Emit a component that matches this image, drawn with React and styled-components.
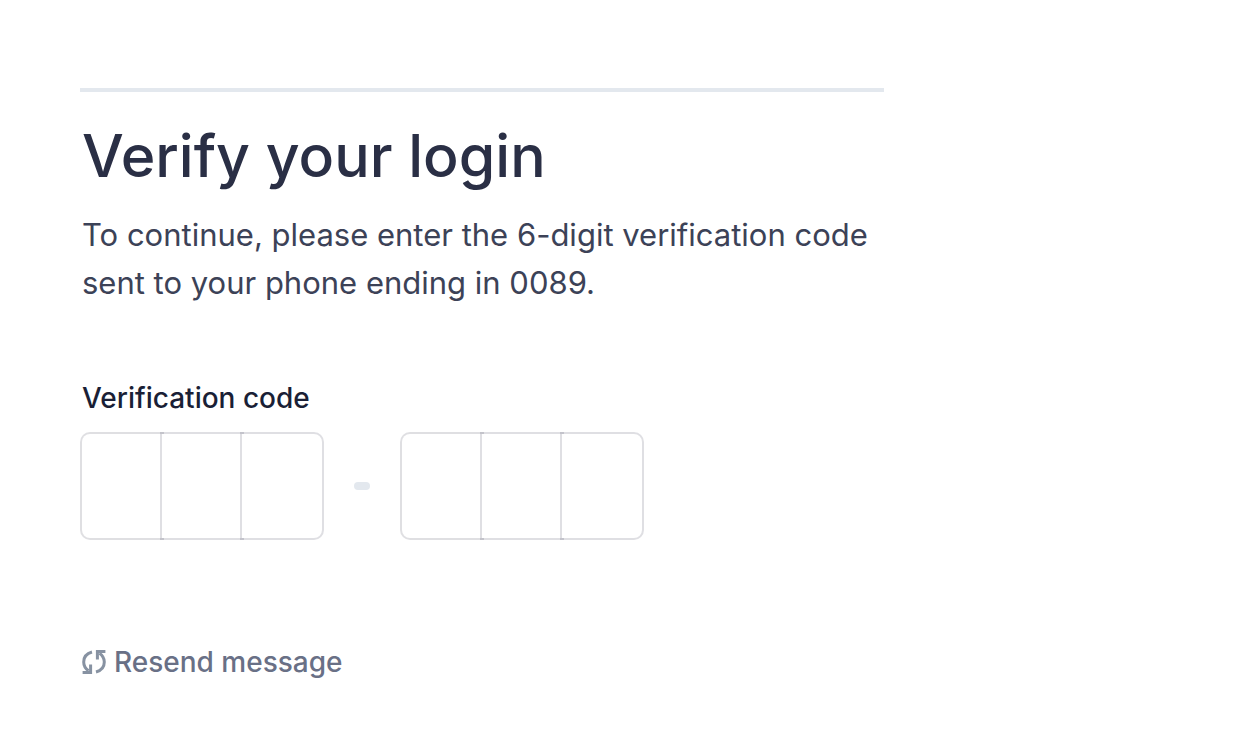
import React from "react";
import styled, { createGlobalStyle } from "styled-components";

const GlobalStyle = createGlobalStyle`
  *, *::before, *::after { box-sizing: border-box; }
  body {
    margin: 0;
    background: #ffffff;
    font-family: Inter, "Liberation Sans", sans-serif;
    color: #1a1f36;
  }
`;

const Page = styled.main`
  padding: 88px 80px 56px;
`;

const Panel = styled.form`
  max-width: 804px;
  border-top: 4px solid #e3e8ee;
  padding: 26px 2px 0;
`;

const Title = styled.h1`
  margin: 0;
  font-size: 59px;
  line-height: 76px;
  font-weight: 500;
  color: #2a2f45;
`;

const Intro = styled.p`
  margin: 17px 0 0;
  font-size: 31px;
  line-height: 48px;
  color: #3c4257;
`;

const CodeField = styled.fieldset`
  margin: 71px 0 0;
  padding: 0;
  border: 0;
`;

const Legend = styled.legend`
  padding: 0;
  font-size: 28px;
  line-height: 40px;
  font-weight: 500;
`;

const CodeRow = styled.div`
  display: flex;
  align-items: center;
  gap: 30px;
  margin: 14px -2px 0;
`;

const DigitGroup = styled.div`
  display: flex;
`;

const Digit = styled.input`
  width: 84px;
  height: 108px;
  padding: 0;
  border: 2px solid rgba(40, 40, 65, 0.15);
  border-radius: 0;
  background: transparent;
  font: inherit;
  font-size: 32px;
  text-align: center;
  outline: none;

  &:not(:first-child) {
    margin-left: -4px;
  }
  &:not(:last-child) {
    border-right: 0;
  }
  &:first-child {
    border-radius: 10px 0 0 10px;
  }
  &:last-child {
    border-radius: 0 10px 10px 0;
  }
`;

const Dash = styled.span`
  width: 16px;
  height: 8px;
  border-radius: 4px;
  background: #e3e8ee;
`;

const Resend = styled.button`
  display: flex;
  align-items: center;
  gap: 8px;
  margin: 102px 0 0;
  padding: 0;
  border: 0;
  background: none;
  font: inherit;
  font-size: 28px;
  line-height: 40px;
  font-weight: 500;
  color: #697086;
  cursor: pointer;
`;

function ResendIcon() {
  return (
    <svg width="24" height="24" viewBox="0 0 24 24" fill="none" stroke="#8792a2" strokeWidth="3" aria-hidden="true">
      <path d="M10 2C5 3.4 1.7 7.2 1.7 12c0 3.6 1.9 6.7 4.8 8.8" />
      <path d="M0.6 22.4H8.6V14.6" />
      <path d="M14 22C19 20.6 22.3 16.8 22.3 12c0-3.6-1.9-6.7-4.8-8.8" />
      <path d="M23.4 1.6H15.4V9.4" />
    </svg>
  );
}

function DigitInputs({ start }) {
  return (
    <DigitGroup>
      {[0, 1, 2].map((i) => (
        <Digit key={i} inputMode="numeric" maxLength={1} aria-label={`Digit ${start + i}`} />
      ))}
    </DigitGroup>
  );
}

export default function App() {
  return (
    <Page>
      <GlobalStyle />
      <Panel>
        <Title>Verify your login</Title>
        <Intro>To continue, please enter the 6-digit verification code sent to your phone ending in 0089.</Intro>
        <CodeField>
          <Legend>Verification code</Legend>
          <CodeRow>
            <DigitInputs start={1} />
            <Dash />
            <DigitInputs start={4} />
          </CodeRow>
        </CodeField>
        <Resend type="button">
          <ResendIcon />
          Resend message
        </Resend>
      </Panel>
    </Page>
  );
}
